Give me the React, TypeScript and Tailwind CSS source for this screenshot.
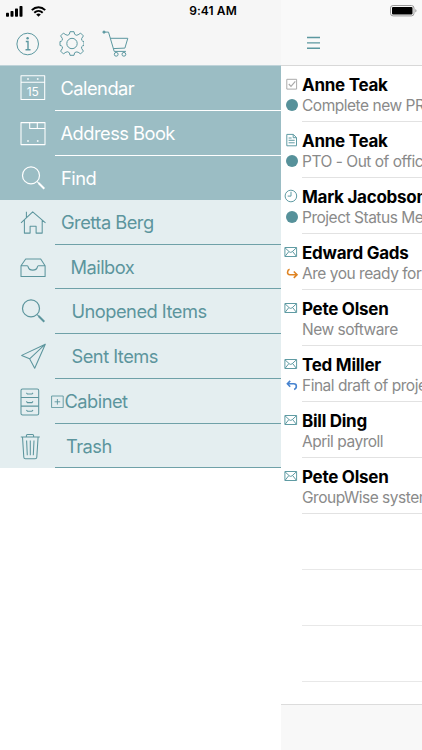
import type { ReactNode } from "react";

type FolderIcon = "calendar" | "book" | "search" | "home" | "mailbox" | "sent" | "cabinet" | "trash";
type MailKind = "task" | "note" | "appointment" | "mail";
type MailState = "unread" | "forwarded" | "replied";

const shortcuts: { label: string; icon: FolderIcon; style: string }[] = [
  { label: "Calendar", icon: "calendar", style: "pl-[6px] border-white" },
  { label: "Address Book", icon: "book", style: "pl-[6px] border-white" },
  { label: "Find", icon: "search", style: "pl-[6.5px] border-transparent" },
];

const folders: { label: string; icon: FolderIcon; style: string; expandable?: boolean }[] = [
  { label: "Gretta Berg", icon: "home", style: "pl-[6.5px] border-[#6fa1a8]" },
  { label: "Mailbox", icon: "mailbox", style: "pl-[16px] border-[#6fa1a8]" },
  { label: "Unopened Items", icon: "search", style: "pl-[17px] border-[#6fa1a8]" },
  { label: "Sent Items", icon: "sent", style: "pl-[17px] border-[#6fa1a8]" },
  { label: "Cabinet", icon: "cabinet", style: "pl-[10px] border-[#6fa1a8]", expandable: true },
  { label: "Trash", icon: "trash", style: "pl-[11.5px] border-[#6fa1a8]" },
];

const messages: { from: string; subject: string; kind: MailKind; state?: MailState }[] = [
  { from: "Anne Teak", subject: "Complete new PR", kind: "task", state: "unread" },
  { from: "Anne Teak", subject: "PTO - Out of office", kind: "note", state: "unread" },
  { from: "Mark Jacobson", subject: "Project Status Meeting", kind: "appointment", state: "unread" },
  { from: "Edward Gads", subject: "Are you ready for", kind: "mail", state: "forwarded" },
  { from: "Pete Olsen", subject: "New software", kind: "mail" },
  { from: "Ted Miller", subject: "Final draft of project", kind: "mail", state: "replied" },
  { from: "Bill Ding", subject: "April payroll", kind: "mail" },
  { from: "Pete Olsen", subject: "GroupWise system", kind: "mail" },
];

const folderShapes: Record<FolderIcon, ReactNode> = {
  calendar: (
    <>
      <path d="M1 9.8h23.7v23.6H1zM1 16.2h23.7" />
      <path d="M7.2 13h1.6M16.9 13h1.6" strokeWidth="1.5" />
      <text x="12.8" y="29.7" textAnchor="middle" fontSize="12" fill="currentColor" stroke="none">15</text>
    </>
  ),
  book: (
    <>
      <path d="M1 11.6h24v22H1zM9.7 11.6v5.8H25M17.3 11.6v5.8" />
      <path d="M7.2 30h1.6M16.9 30h1.6" strokeWidth="1.5" />
    </>
  ),
  search: (
    <>
      <circle cx="11" cy="19.4" r="8.5" strokeWidth="1.2" />
      <path d="M17.2 25.7l1.5 1.5" />
      <path d="M18.5 27l5.8 5.8" strokeWidth="2" />
    </>
  ),
  home: <path d="M1 22.8l11.7-11L25.5 22.8M6.4 17.6v-5.8M4.4 20v13.1h5.7v-6.8h6v6.8h6.1V20" />,
  mailbox: <path d="M1 20.8L5.7 14h15l4.4 6.8v10.7H1zM1 20.8h6.2c.6 0 .8.4 1 1.2.5 2 2.2 3.1 4.6 3.1s4.1-1.1 4.6-3.1c.2-.8.4-1.2 1-1.2H25" />,
  sent: <path d="M25.3 10.2L1.7 21.4l7.9 3.4 5.1 9.4zM25.3 10.2L9.6 24.8" />,
  cabinet: (
    <>
      <rect x="1" y="9.9" width="17.7" height="26" rx="1.5" />
      <path d="M1 18.5h17.7M1 27.1h17.7M6.4 13.8l1 1.2h4.6l1-1.2M6.4 22.4l1 1.2h4.6l1-1.2M6.4 31l1 1.2h4.6l1-1.2" />
    </>
  ),
  trash: <path d="M.8 13h19M6.4 13v-1.6q0-1 1-1h5.2q1 0 1 1V13M2.5 13l1.3 20.2q.1 1.6 1.6 1.6h9.8q1.5 0 1.6-1.6L18.1 13M6.6 16.5l.7 14.7M10.3 16.5v14.7M14 16.5l-.7 14.7" />,
};

function FolderGlyph({ icon }: { icon: FolderIcon }) {
  return (
    <svg viewBox="0 0 28 44.75" className="ml-5 h-[44.75px] w-7 shrink-0" fill="none" stroke="currentColor" strokeWidth="1.05" strokeLinejoin="round">
      {folderShapes[icon]}
    </svg>
  );
}

function MailGlyph({ kind }: { kind: MailKind }) {
  return (
    <svg viewBox="0 0 14 14" className="h-3.5 w-3.5" fill="none" stroke="#5f9ba3" strokeWidth="1">
      {kind === "task" && (
        <g stroke="#aaa">
          <path d="M2.8 2.3h9.8v9.8H2.8z" />
          <path d="M4.8 7l2.2 2.4 4.3-5" strokeWidth="1.2" />
        </g>
      )}
      {kind === "note" && <path d="M2.8 1.4h6.5l3.2 3.2v8.2H2.8zM9.2 1.4v3.3h3.3M4.6 5h3M4.6 7.3h6.1M4.6 9.8h6.1" />}
      {kind === "appointment" && (
        <>
          <circle cx="6.9" cy="7" r="5.8" />
          <path d="M7 2.8v4.3H3.7" />
        </>
      )}
      {kind === "mail" && <path d="M.9 2.5h11.7v9H.9zM1 2.8l4.3 4q1.4 1.2 2.8 0l4.3-4M1.2 11.2l3.6-4.6M12.3 11.2L8.7 6.6" />}
    </svg>
  );
}

function StateGlyph({ state }: { state?: MailState }) {
  if (!state) return null;
  if (state === "unread") return <span className="ml-[3px] size-3 rounded-full bg-[#56919a]" />;
  if (state === "forwarded") {
    return (
      <svg viewBox="0 0 14 14" className="ml-0.5 size-3.5" fill="none" stroke="#df8423" strokeWidth="1.6">
        <path d="M4.6 3.3C2.2 4 1.5 8.7 4.8 8.7h7M8.8 5.5l3.2 3.2-3.2 3.2" />
      </svg>
    );
  }
  return (
    <svg viewBox="0 0 14 14" className="ml-0.5 size-3.5" fill="none" stroke="#4783cf" strokeWidth="1.6">
      <path d="M5.2 2.9L2.4 5.8l2.8 2.9M2.5 5.8h6.3c3.5 0 3.2 4.8.3 5.6" />
    </svg>
  );
}

function StatusBar() {
  return (
    <div className="flex h-[22px] items-center justify-between pr-1.5 pl-1.5">
      <div className="flex w-20 items-center gap-2">
        <svg viewBox="0 0 17 11" className="h-[11px] w-[17px]" fill="#000">
          <rect x="0" y="6.8" width="3" height="3.9" rx=".7" />
          <rect x="4.5" y="5" width="3" height="5.7" rx=".7" />
          <rect x="9" y="2.6" width="3" height="8.1" rx=".7" />
          <rect x="13.5" y="0" width="3" height="10.7" rx=".7" />
        </svg>
        <svg viewBox="0 0 15 11" className="h-[11px] w-[15px]" fill="none" stroke="#000" strokeWidth="2">
          <path d="M.8 4.1C4.6.3 10.4.3 14.2 4.1M3.3 6.7c2.5-2.3 5.9-2.3 8.4 0" />
          <path d="M7.5 10.7L5.2 8.5q2.3-1.8 4.6 0z" fill="#000" stroke="none" />
        </svg>
      </div>
      <span className="pl-[4px] text-[12px] leading-[22px] font-semibold tracking-[0.1px] text-black">9:41 AM</span>
      <div className="flex w-20 justify-end">
        <svg viewBox="0 0 27 12" className="-mr-[1px] h-3 w-[27px]" fill="none">
          <rect x=".5" y=".5" width="23.5" height="10.4" rx="2.6" stroke="#999" />
          <rect x="2" y="2" width="20.5" height="7.4" rx="1" fill="#000" />
          <path d="M25.3 4v3.5q1.2-.4 1.2-1.75T25.3 4z" fill="#999" />
        </svg>
      </div>
    </div>
  );
}

function Toolbar() {
  return (
    <div className="flex h-[43px] text-[#5c98a0]">
      <div className="flex w-[281px] gap-5 pl-[15px]">
        <svg viewBox="0 0 25 43" className="h-[43px] w-[25px]" fill="none" stroke="currentColor">
          <circle cx="12.7" cy="22" r="10.8" />
          <path d="M10.8 19.5h2.2v8.2M10.5 27.8h5" strokeWidth="1.4" />
          <circle cx="12.6" cy="16.2" r="1.2" fill="currentColor" stroke="none" />
        </svg>
        <svg viewBox="0 0 25 43" className="-ml-[1px] h-[43px] w-[25px]" fill="none" stroke="currentColor" strokeLinejoin="round">
          <circle cx="13" cy="21.5" r="5.2" />
          <path d="M11 9.7h4l.6 2.5q1.5 1.8 3.5.6l2.5-1.7 2.8 2.8-1.7 2.5q-.6 2.2 1.1 2.9l1.2.2v4l-1.2.2q-1.9.8-1.1 2.9l1.7 2.5-2.8 2.8-2.5-1.7q-2.2-.8-3.5.6l-.6 2.5h-4l-.6-2.5q-1.5-1.8-3.5-.6l-2.5 1.7-2.8-2.8 1.7-2.5q.8-2.1-1.1-2.9L1 23.5v-4l1.2-.2q1.7-.7 1.1-2.9l-1.7-2.5 2.8-2.8 2.5 1.7q2 1.2 3.5-.6z" />
        </svg>
        <svg viewBox="0 0 28 43" className="-ml-[2px] h-[43px] w-7" fill="none" stroke="currentColor" strokeLinejoin="round">
          <circle cx="2" cy="10.1" r="1.1" fill="currentColor" />
          <path d="M2 10.1h4.5l5.7 19.3h11.7M8.2 16.3h17.6l-2.9 9.8-11.6.5" />
          <circle cx="14.2" cy="32.3" r="1.9" />
          <circle cx="21.9" cy="32.3" r="1.9" />
        </svg>
      </div>
      <svg viewBox="0 0 14 43" className="ml-[26px] h-[43px] w-3.5" stroke="currentColor" strokeWidth="1.4">
        <path d="M0 15.5h13M0 20.9h13M0 26.3h13" />
      </svg>
    </div>
  );
}

function FolderRow({ icon, style, label, expandable }: { icon: FolderIcon; style: string; label: string; expandable?: boolean }) {
  return (
    <li className="flex h-[44.75px] items-stretch">
      <FolderGlyph icon={icon} />
      <div className={`relative ml-[6.5px] flex-1 border-b text-[18.3px] leading-[44.75px] tracking-[-0.52px] whitespace-nowrap ${style}`}>
        {expandable && (
          <svg viewBox="0 0 13 13" className="absolute top-4 -left-1 size-[13px]" fill="none" stroke="currentColor" strokeWidth=".9">
            <path d="M.6 1h11.6v11.6H.6zM3.6 6.8h5.6M6.4 4v5.6" />
          </svg>
        )}
        {label}
      </div>
    </li>
  );
}

export default function App() {
  return (
    <div className="flex h-[750px] w-[422px] flex-col overflow-hidden bg-white font-[Inter,'Liberation_Sans',sans-serif]">
      <header className="bg-[linear-gradient(to_right,#f6f6f6_281px,#f9f9f9_281px)]">
        <StatusBar />
        <Toolbar />
      </header>
      <div className="flex min-h-0 flex-1">
        <nav className="w-[281px] shrink-0 border-t border-[#bfd3d9]">
          <ul className="h-[133.75px] overflow-hidden bg-[#9bbdc4] text-white">
            {shortcuts.map((item) => (
              <FolderRow key={item.label} {...item} />
            ))}
          </ul>
          <ul className="bg-[#e4eef0] text-[#5c959d]">
            {folders.map((item) => (
              <FolderRow key={item.label} {...item} />
            ))}
          </ul>
        </nav>
        <main className="flex min-w-0 flex-1 flex-col border-t border-[#d8d8d8]">
          <ul className="min-h-0 flex-1 overflow-hidden">
            {messages.map((message, index) => (
              <li key={index} className="flex h-14">
                <div className="flex w-[21px] shrink-0 flex-col gap-[7px] pt-[11px] pl-[3px]">
                  <MailGlyph kind={message.kind} />
                  <span className="-ml-[1px] flex h-3.5 items-center">
                    <StateGlyph state={message.state} />
                  </span>
                </div>
                <div className="flex-1 overflow-hidden border-b border-[#e2e2e2] pt-[8px] whitespace-nowrap">
                  <div className="text-[17px] leading-[22px] font-bold tracking-[-0.27px] text-black">{message.from}</div>
                  <div className="text-[15.5px] leading-5 tracking-[-0.48px] text-[#8a8a8a]">{message.subject}</div>
                </div>
              </li>
            ))}
            {[0, 1, 2].map((slot) => (
              <li key={slot} className="ml-[21px] h-14 border-b border-[#e8e8e8]" />
            ))}
          </ul>
          <footer className="h-[46px] border-t border-[#dcdcdc] bg-[#f8f8f8]" />
        </main>
      </div>
    </div>
  );
}
